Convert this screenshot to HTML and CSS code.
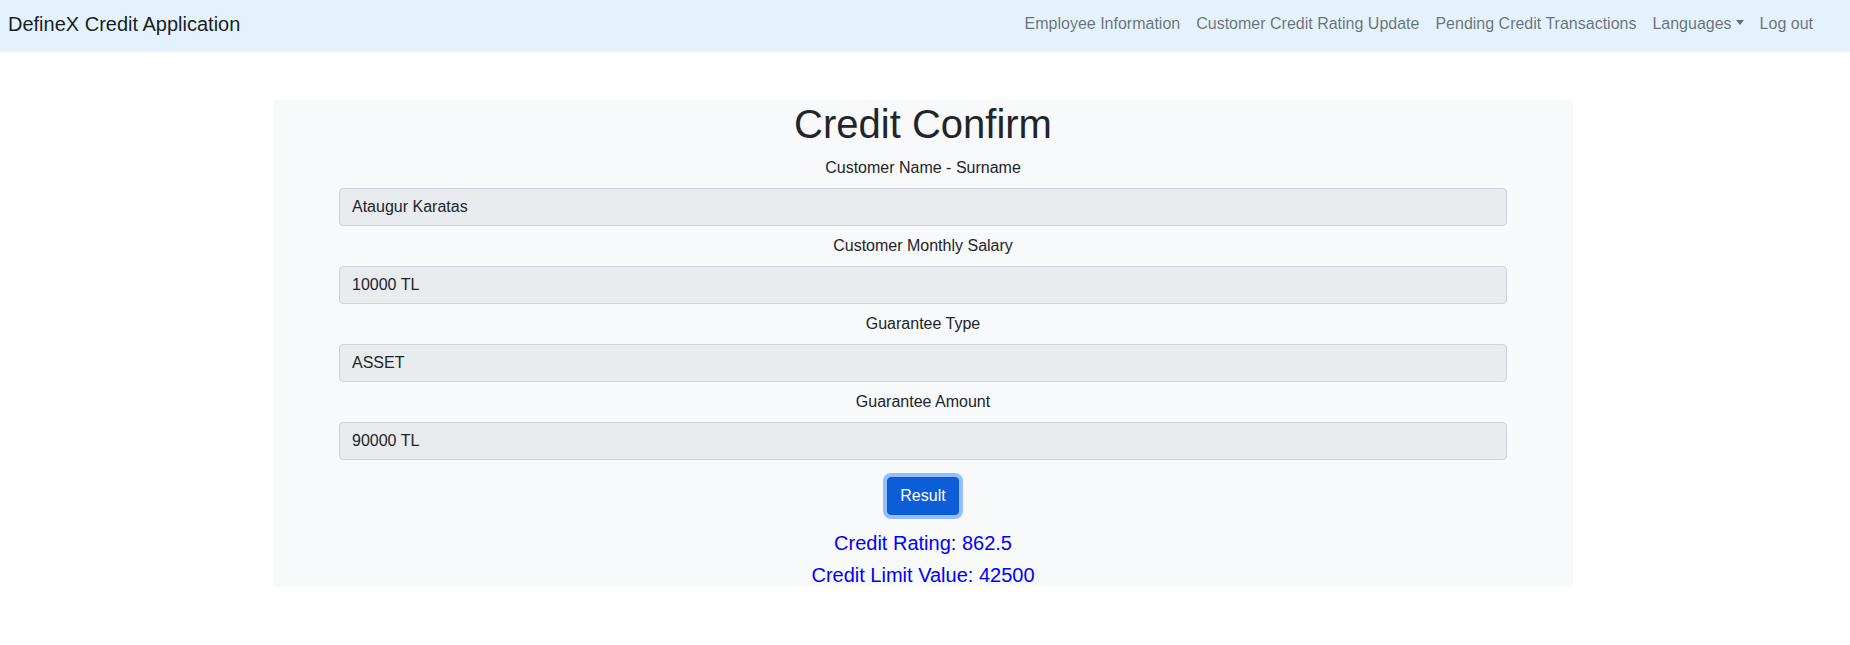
FILE: index.html
```html
<!DOCTYPE html>
<html lang="en">
<head>
<meta charset="utf-8">
<title>DefineX Credit Application</title>
<link rel="stylesheet" href="styles.css">
</head>
<body>
<nav class="navbar">
  <a class="brand" href="#">DefineX Credit Application</a>
  <ul class="nav">
    <li><a class="nav-link" href="#">Employee Information</a></li>
    <li><a class="nav-link" href="#">Customer Credit Rating Update</a></li>
    <li><a class="nav-link" href="#">Pending Credit Transactions</a></li>
    <li><a class="nav-link dropdown" href="#">Languages<span class="caret"></span></a></li>
    <li><a class="nav-link" href="#">Log out</a></li>
  </ul>
</nav>
<main class="page">
  <section class="panel">
    <h1 class="title">Credit Confirm</h1>
    <div class="field">
      <label class="label">Customer Name - Surname</label>
      <input class="control" type="text" value="Ataugur Karatas" readonly>
    </div>
    <div class="field">
      <label class="label">Customer Monthly Salary</label>
      <input class="control" type="text" value="10000 TL" readonly>
    </div>
    <div class="field">
      <label class="label">Guarantee Type</label>
      <input class="control" type="text" value="ASSET" readonly>
    </div>
    <div class="field last">
      <label class="label">Guarantee Amount</label>
      <input class="control" type="text" value="90000 TL" readonly>
    </div>
    <div class="actions">
      <button class="btn" type="button">Result</button>
    </div>
    <h5 class="result">Credit Rating: 862.5</h5>
    <h5 class="result">Credit Limit Value: 42500</h5>
  </section>
</main>
</body>
</html>
```
FILE: styles.css
```css
* { box-sizing: border-box; }
html, body {
  margin: 0;
  padding: 0;
  background: #fff;
  font-family: "Liberation Sans", Arial, sans-serif;
  font-size: 16px;
  line-height: 1.5;
  color: #212529;
}
.navbar {
  display: flex;
  align-items: center;
  justify-content: space-between;
  height: 52px;
  padding: 4px 29px 8px 8px;
  background: #e3f2fd;
}
.brand {
  font-size: 20px;
  line-height: 30px;
  padding: 5px 0;
  color: rgba(0,0,0,.9);
  text-decoration: none;
}
.nav {
  display: flex;
  list-style: none;
  margin: 0;
  padding: 0;
}
.nav-link {
  display: block;
  padding: 8px;
  line-height: 24px;
  color: rgba(0,0,0,.55);
  text-decoration: none;
}
.caret {
  display: inline-block;
  margin-left: 4px;
  vertical-align: 4px;
  border-top: 5px solid;
  border-left: 4px solid transparent;
  border-right: 4px solid transparent;
}
.page {
  display: flex;
  justify-content: center;
  padding: 48px 4px 0 0;
}
.panel {
  width: 1300px;
  background: #f8f9fa;
  padding: 0 66px;
  text-align: center;
}
.title {
  margin: 0 0 8px;
  font-size: 40px;
  line-height: 48px;
  font-weight: 400;
}
.field { margin-bottom: 8px; }
.field.last { margin-bottom: 0; }
.label {
  display: block;
  margin-bottom: 8px;
  line-height: 24px;
}
.control {
  display: block;
  width: 100%;
  height: 38px;
  padding: 6px 12px;
  font: inherit;
  font-size: 16px;
  line-height: 24px;
  color: #212529;
  background: #e9ecef;
  border: 1px solid #ced4da;
  border-radius: 4px;
  outline: none;
}
.actions { margin-top: 17px; }
.btn {
  display: inline-block;
  height: 38px;
  padding: 6px 12px;
  font: inherit;
  font-size: 16px;
  line-height: 24px;
  color: #fff;
  background: #0b5ed7;
  border: 1px solid #0a58ca;
  border-radius: 4px;
  box-shadow: 0 0 0 4px rgba(49,132,253,.5);
  cursor: pointer;
}
.result {
  margin: 0;
  font-size: 20px;
  line-height: 24px;
  font-weight: 400;
  color: #0000ff;
}
.actions + .result { margin-top: 16px; }
.result + .result { margin-top: 8px; }
```
